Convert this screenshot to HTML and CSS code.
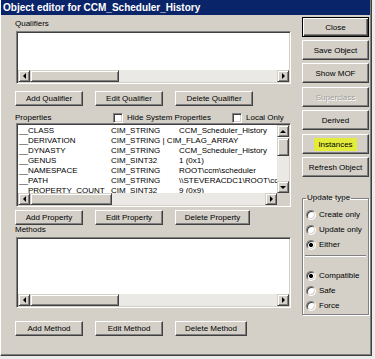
FILE: index.html
```html
<!DOCTYPE html>
<html lang="en">
<head>
    <meta charset="UTF-8">
    <title>Object editor for CCM_Scheduler_History</title>
    <link rel="stylesheet" href="styles.css">
</head>
<body>
    <div class="window">
        <div class="titlebar">Object editor for CCM_Scheduler_History</div>

        <div class="client">
            <div class="main">
                <div class="caption">Qualifiers</div>
                <div class="listbox qualifiers">
                    <div class="lb-body"></div>
                    <div class="hscroll">
                        <span class="sb-btn arrow-left"></span>
                        <span class="sb-thumb thumb-wide"></span>
                        <span class="sb-track"></span>
                        <span class="sb-btn arrow-right"></span>
                    </div>
                </div>
                <div class="btn-row">
                    <button class="btn">Add Qualifier</button>
                    <button class="btn">Edit Qualifier</button>
                    <button class="btn del-qual">Delete Qualifier</button>
                </div>

                <div class="props-head">
                    <span class="props-label">Properties</span>
                    <label class="check check-hide"><span class="checkbox"></span>Hide System Properties</label>
                    <label class="check"><span class="checkbox"></span>Local Only</label>
                </div>
                <div class="listbox props">
                    <div class="lb-main">
                        <div class="prop-grid">
                            <span>__CLASS</span><span>CIM_STRING</span><span>CCM_Scheduler_History</span>
                            <span>__DERIVATION</span><span>CIM_STRING | CIM_FLAG_ARRAY</span><span></span>
                            <span>__DYNASTY</span><span>CIM_STRING</span><span>CCM_Scheduler_History</span>
                            <span>__GENUS</span><span>CIM_SINT32</span><span>1 (0x1)</span>
                            <span>__NAMESPACE</span><span>CIM_STRING</span><span>ROOT\ccm\scheduler</span>
                            <span>__PATH</span><span>CIM_STRING</span><span>\\STEVERACDC1\ROOT\ccm\scheduler:CCM_Scheduler_History</span>
                            <span>__PROPERTY_COUNT</span><span>CIM_SINT32</span><span>9 (0x9)</span>
                        </div>
                        <div class="vscroll">
                            <span class="sb-btn arrow-up"></span>
                            <span class="sb-thumb thumb-v"></span>
                            <span class="sb-track"></span>
                            <span class="sb-btn arrow-down"></span>
                        </div>
                    </div>
                    <div class="hscroll">
                        <span class="sb-btn arrow-left"></span>
                        <span class="sb-thumb thumb-props"></span>
                        <span class="sb-track"></span>
                        <span class="sb-btn arrow-right"></span>
                        <span class="sb-corner"></span>
                    </div>
                </div>
                <div class="btn-row row-props">
                    <button class="btn">Add Property</button>
                    <button class="btn">Edit Property</button>
                    <button class="btn del-prop">Delete Property</button>
                </div>

                <div class="caption methods-label">Methods</div>
                <div class="listbox methods">
                    <div class="lb-body"></div>
                    <div class="hscroll">
                        <span class="sb-btn arrow-left"></span>
                        <span class="sb-thumb thumb-wide"></span>
                        <span class="sb-track"></span>
                        <span class="sb-btn arrow-right"></span>
                    </div>
                </div>
                <div class="btn-row row-methods">
                    <button class="btn">Add Method</button>
                    <button class="btn">Edit Method</button>
                    <button class="btn del-meth">Delete Method</button>
                </div>
            </div>

            <div class="side">
                <button class="side-btn default">Close</button>
                <button class="side-btn">Save Object</button>
                <button class="side-btn">Show MOF</button>
                <button class="side-btn gap4 disabled">Superclass</button>
                <button class="side-btn">Derived</button>
                <button class="side-btn gap4"><span class="hl">Instances</span></button>
                <button class="side-btn">Refresh Object</button>

                <fieldset class="group">
                    <legend>Update type</legend>
                    <div class="radio-row"><span class="radio"></span>Create only</div>
                    <div class="radio-row"><span class="radio"></span>Update only</div>
                    <div class="radio-row"><span class="radio on"></span>Either</div>
                    <div class="sep"></div>
                    <div class="radio-row"><span class="radio on"></span>Compatible</div>
                    <div class="radio-row"><span class="radio"></span>Safe</div>
                    <div class="radio-row"><span class="radio"></span>Force</div>
                </fieldset>
            </div>
        </div>
    </div>
</body>
</html>
```

FILE: styles.css
```css
* {
    box-sizing: border-box;
}
body {
    margin: 0;
    background: #ebebeb;
    font-family: "Liberation Sans", Arial, sans-serif;
    font-size: 8px;
    color: #000;
}
.window {
    width: 372px;
    height: 356px;
    background: #d4d0c8;
    border-left: 1px solid #fff;
    border-right: 1px solid #404040;
    border-bottom: 1px solid #404040;
    box-shadow: inset -1px -1px #808080;
}
.titlebar {
    height: 15px;
    margin-right: 1px;
    padding-left: 2px;
    background: #0a246a;
    color: #fff;
    font-size: 10px;
    font-weight: bold;
    line-height: 15px;
}
.client {
    display: flex;
    gap: 11px;
    padding-left: 14px;
}

/* left column */
.main {
    width: 276px;
    padding-top: 4px;
}
.caption {
    height: 12px;
    line-height: 10px;
}
.listbox {
    display: flex;
    flex-direction: column;
    margin-left: 1px;
    background: #fff;
    border: 1px solid;
    border-color: #808080 #fff #fff #808080;
    box-shadow: inset 1px 1px #404040, inset -1px -1px #d4d0c8;
    padding: 1px;
}
.lb-body {
    flex: 1;
}
.qualifiers {
    height: 53px;
}
.props {
    height: 84px;
}
.methods {
    height: 71px;
}
.btn-row {
    display: flex;
    gap: 12px;
    margin-top: 7px;
}
.row-props {
    margin-top: 3px;
}
.row-methods {
    margin-top: 13px;
}
.btn,
.side-btn {
    height: 15px;
    width: 68px;
    padding: 0;
    font: inherit;
    color: #000;
    background: #d4d0c8;
    border: 1px solid;
    border-color: #fff #404040 #404040 #fff;
    box-shadow: inset -1px -1px #808080;
}
.del-qual {
    width: 78px;
}
.del-prop {
    width: 75px;
}
.del-meth {
    width: 72px;
}

.props-head {
    display: flex;
    align-items: center;
    height: 11px;
    margin-top: 6px;
}
.props-label {
    width: 98px;
}
.check {
    display: flex;
    align-items: center;
    gap: 4px;
}
.check-hide {
    width: 119px;
}
.checkbox,
.radio {
    width: 10px;
    height: 10px;
    flex: none;
    background: #fff;
    border: 1px solid;
    border-color: #808080 #fff #fff #808080;
    box-shadow: inset 1px 1px #404040, inset -1px -1px #d4d0c8;
}

.lb-main {
    flex: 1;
    display: flex;
    min-height: 0;
    overflow: hidden;
}
.prop-grid {
    flex: 1;
    display: grid;
    grid-template-columns: 92px 68px minmax(0, 1fr);
    grid-auto-rows: 10px;
    align-content: start;
    padding: 1px 0 0 1px;
    line-height: 10px;
    white-space: nowrap;
    overflow: hidden;
}

/* scrollbars */
.hscroll {
    display: flex;
    height: 12px;
    flex: none;
}
.vscroll {
    display: flex;
    flex-direction: column;
    width: 12px;
    flex: none;
}
.sb-btn,
.sb-thumb {
    display: flex;
    align-items: center;
    justify-content: center;
    flex: none;
    background: #d4d0c8;
    border: 1px solid;
    border-color: #d4d0c8 #404040 #404040 #d4d0c8;
    box-shadow: inset 1px 1px #fff, inset -1px -1px #808080;
}
.sb-btn {
    width: 12px;
    height: 12px;
}
.sb-btn::before {
    content: "";
    border-style: solid;
}
.arrow-left::before {
    border-width: 3px 3px 3px 0;
    border-color: transparent #000 transparent transparent;
}
.arrow-right::before {
    border-width: 3px 0 3px 3px;
    border-color: transparent transparent transparent #000;
}
.arrow-up::before {
    border-width: 0 3px 3px;
    border-color: transparent transparent #000;
}
.arrow-down::before {
    border-width: 3px 3px 0;
    border-color: #000 transparent transparent;
}
.sb-track {
    flex: 1;
    background: #ebe9e5;
}
.sb-corner {
    width: 12px;
    flex: none;
    background: #d4d0c8;
}
.thumb-wide {
    width: 89px;
}
.thumb-props {
    width: 82px;
}
.thumb-v {
    height: 18px;
    margin-top: 1px;
}

/* right column */
.side {
    display: flex;
    flex-direction: column;
    width: 67px;
    padding-top: 2px;
}
.side-btn {
    width: 67px;
    height: 20px;
    margin-top: 3px;
}
.side-btn.default {
    margin-top: 0;
    border-color: #000;
    box-shadow: inset 1px 1px #fff, inset -1px -1px #404040, inset -2px -2px #808080;
}
.side-btn.gap4 {
    margin-top: 4px;
}
.side-btn.disabled {
    color: #a09e9a;
    text-shadow: 1px 1px #fff;
}
.hl {
    padding: 2px 4px;
    background: #e3ec3a;
}

.group {
    margin: 16px 0 0;
    padding: 4px 0 1px 3px;
    border: 1px solid #808080;
    box-shadow: inset 1px 1px #fff, 1px 1px #fff;
}
.group legend {
    padding: 0 1px;
    line-height: 10px;
}
.radio-row {
    display: flex;
    align-items: center;
    gap: 3px;
    height: 15px;
}
.radio {
    border-radius: 50%;
}
.radio.on {
    background: radial-gradient(circle, #000 0 1.8px, #fff 2.3px);
}
.sep {
    height: 2px;
    margin: 3px 2px 11px -1px;
    border-top: 1px solid #808080;
    border-bottom: 1px solid #fff;
}
```
